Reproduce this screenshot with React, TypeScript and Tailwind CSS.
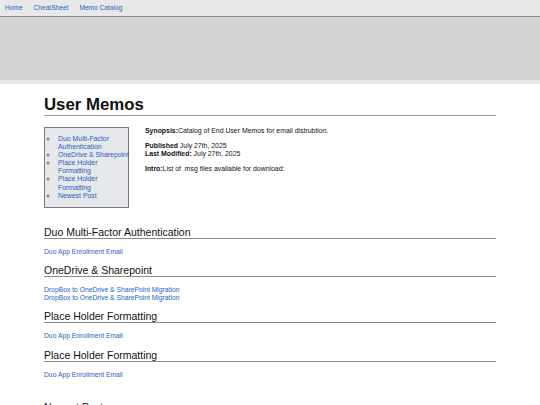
const navLinks = ['Home', 'CheatSheet', 'Memo Catalog'];

const toc = [
  'Duo Multi-Factor Authentication',
  'OneDrive & Sharepoint',
  'Place Holder Formatting',
  'Place Holder Formatting',
  'Newest Post',
];

const sections = [
  { title: 'Duo Multi-Factor Authentication', links: ['Duo App Enrollment Email'] },
  {
    title: 'OneDrive & Sharepoint',
    links: ['DropBox to OneDrive & SharePoint Migration', 'DropBox to OneDrive & SharePoint Migration'],
  },
  { title: 'Place Holder Formatting', links: ['Duo App Enrollment Email'] },
  { title: 'Place Holder Formatting', links: ['Duo App Enrollment Email'] },
];

export default function App() {
  return (
    <div className="min-h-[405px] w-[540px] overflow-hidden bg-white font-['Liberation_Sans',Arial,sans-serif] text-[#111]">
      {/* Top nav */}
      <nav className="flex h-[17px] items-center gap-[11px] border-b border-[#8a8a8a] bg-[#e7e8ea] px-[5px] text-[6.6px]">
        {navLinks.map((l) => (
          <a key={l} href="#" className="text-[#2f63b0]">
            {l}
          </a>
        ))}
      </nav>

      {/* Banner */}
      <div className="h-[63px] bg-[#d4d4d4]" />
      <div className="h-[4px] bg-[#e9e9eb]" />

      <main className="px-[44px]">
        <h1 className="mt-[10px] border-b border-[#a0a0a0] text-[16.8px] font-bold leading-[21px]">User Memos</h1>

        <div className="mt-[11px] flex items-start gap-[16px]">
          <div className="w-[85px] shrink-0 border border-[#777] bg-[#e5e7ea] py-[7px]">
            <ul className="list-[circle] pl-[13px] text-[6.9px] leading-[8.1px] marker:text-[#666]">
              {toc.map((t, i) => (
                <li key={i} className="-mr-[2px]">
                  <a href="#" className="text-[#1f5fbf]">
                    {t}
                  </a>
                </li>
              ))}
            </ul>
          </div>

          <div className="text-[6.9px] leading-[8px]">
            <p>
              <b>Synopsis:</b>Catalog of End User Memos for email distrubtion.
            </p>
            <p className="mt-[7px]">
              <b>Published</b> July 27th, 2025
              <br />
              <b>Last Modified:</b> July 27th, 2025
            </p>
            <p className="mt-[7px]">
              <b>Intro:</b>List of .msg files available for download:
            </p>
          </div>
        </div>

        <div className="mt-[18px]">
          {sections.map((s, i) => (
            <section key={i} className={i > 0 ? 'mt-[9px]' : ''}>
              <h2 className="border-b border-[#8a8a8a] text-[10.5px] leading-[12px]">{s.title}</h2>
              <ul className="mt-[9px] text-[6.75px] leading-[7.5px]">
                {s.links.map((l, j) => (
                  <li key={j}>
                    <a href="#" className="text-[#1f5fbf]">
                      {l}
                    </a>
                  </li>
                ))}
              </ul>
            </section>
          ))}
          <section className="mt-[23px]">
            <h2 className="border-b border-[#8a8a8a] text-[10.5px] leading-[12px]">Newest Post</h2>
          </section>
        </div>
      </main>
    </div>
  );
}
